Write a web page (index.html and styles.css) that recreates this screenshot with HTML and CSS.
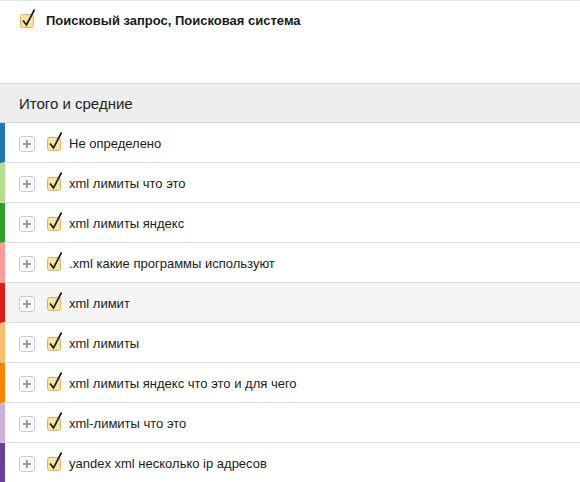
FILE: index.html
```html
<!DOCTYPE html>
<html>
<head>
<meta charset="utf-8">
<link rel="stylesheet" href="styles.css">
</head>
<body>
<div class="top">
  <span class="cb"><svg width="18" height="20" viewBox="0 0 18 20"><rect x="0.5" y="6.5" width="13" height="13" rx="2" fill="#fbe59c" stroke="#cfb66e"/><path d="M3 12.5 L6.5 17 L14.5 1.5" fill="none" stroke="#1c1c1c" stroke-width="1.7"/></svg></span>
  <span class="top-label">Поисковый запрос, Поисковая система</span>
</div>
<div class="head">Итого и средние</div>
<div class="list">
  <div class="row" style="border-left-color:#1f78b4"><span class="plus"></span><span class="cb"><svg width="18" height="20" viewBox="0 0 18 20"><rect x="0.5" y="6.5" width="13" height="13" rx="2" fill="#fbe59c" stroke="#cfb66e"/><path d="M3 12.5 L6.5 17 L14.5 1.5" fill="none" stroke="#1c1c1c" stroke-width="1.7"/></svg></span><span class="label">Не определено</span></div>
  <div class="row" style="border-left-color:#b2df8a"><span class="plus"></span><span class="cb"><svg width="18" height="20" viewBox="0 0 18 20"><rect x="0.5" y="6.5" width="13" height="13" rx="2" fill="#fbe59c" stroke="#cfb66e"/><path d="M3 12.5 L6.5 17 L14.5 1.5" fill="none" stroke="#1c1c1c" stroke-width="1.7"/></svg></span><span class="label">xml лимиты что это</span></div>
  <div class="row" style="border-left-color:#33a02c"><span class="plus"></span><span class="cb"><svg width="18" height="20" viewBox="0 0 18 20"><rect x="0.5" y="6.5" width="13" height="13" rx="2" fill="#fbe59c" stroke="#cfb66e"/><path d="M3 12.5 L6.5 17 L14.5 1.5" fill="none" stroke="#1c1c1c" stroke-width="1.7"/></svg></span><span class="label">xml лимиты яндекс</span></div>
  <div class="row" style="border-left-color:#fb9a99"><span class="plus"></span><span class="cb"><svg width="18" height="20" viewBox="0 0 18 20"><rect x="0.5" y="6.5" width="13" height="13" rx="2" fill="#fbe59c" stroke="#cfb66e"/><path d="M3 12.5 L6.5 17 L14.5 1.5" fill="none" stroke="#1c1c1c" stroke-width="1.7"/></svg></span><span class="label">.xml какие программы используют</span></div>
  <div class="row hover" style="border-left-color:#e31a1c"><span class="plus"></span><span class="cb"><svg width="18" height="20" viewBox="0 0 18 20"><rect x="0.5" y="6.5" width="13" height="13" rx="2" fill="#fbe59c" stroke="#cfb66e"/><path d="M3 12.5 L6.5 17 L14.5 1.5" fill="none" stroke="#1c1c1c" stroke-width="1.7"/></svg></span><span class="label">xml лимит</span></div>
  <div class="row" style="border-left-color:#fdbf6f"><span class="plus"></span><span class="cb"><svg width="18" height="20" viewBox="0 0 18 20"><rect x="0.5" y="6.5" width="13" height="13" rx="2" fill="#fbe59c" stroke="#cfb66e"/><path d="M3 12.5 L6.5 17 L14.5 1.5" fill="none" stroke="#1c1c1c" stroke-width="1.7"/></svg></span><span class="label">xml лимиты</span></div>
  <div class="row" style="border-left-color:#ff7f00"><span class="plus"></span><span class="cb"><svg width="18" height="20" viewBox="0 0 18 20"><rect x="0.5" y="6.5" width="13" height="13" rx="2" fill="#fbe59c" stroke="#cfb66e"/><path d="M3 12.5 L6.5 17 L14.5 1.5" fill="none" stroke="#1c1c1c" stroke-width="1.7"/></svg></span><span class="label">xml лимиты яндекс что это и для чего</span></div>
  <div class="row" style="border-left-color:#cab2d6"><span class="plus"></span><span class="cb"><svg width="18" height="20" viewBox="0 0 18 20"><rect x="0.5" y="6.5" width="13" height="13" rx="2" fill="#fbe59c" stroke="#cfb66e"/><path d="M3 12.5 L6.5 17 L14.5 1.5" fill="none" stroke="#1c1c1c" stroke-width="1.7"/></svg></span><span class="label">xml-лимиты что это</span></div>
  <div class="row" style="border-left-color:#6a3d9a"><span class="plus"></span><span class="cb"><svg width="18" height="20" viewBox="0 0 18 20"><rect x="0.5" y="6.5" width="13" height="13" rx="2" fill="#fbe59c" stroke="#cfb66e"/><path d="M3 12.5 L6.5 17 L14.5 1.5" fill="none" stroke="#1c1c1c" stroke-width="1.7"/></svg></span><span class="label">yandex xml несколько ip адресов</span></div>
</div>
</body>
</html>
```
FILE: styles.css
```css
html, body {
  margin: 0;
  padding: 0;
  background: #fff;
  font-family: "Liberation Sans", Arial, sans-serif;
  color: #1a1a1a;
  overflow: hidden;
}
.top {
  border-top: 1px solid #e4e4e4;
  height: 83px;
  box-sizing: border-box;
  display: flex;
  align-items: flex-start;
  padding: 7px 0 0 20px;
}
.top .cb {
  margin-right: 8px;
  margin-top: 0;
}
.top-label {
  font-size: 13px;
  font-weight: bold;
  margin-top: 5px;
}
.head {
  border-top: 1px solid #d6d6d6;
  border-bottom: 1px solid #d6d6d6;
  background: #eeeeee;
  height: 38px;
  display: flex;
  align-items: center;
  padding-left: 19px;
  font-size: 15px;
  color: #222;
}
.row {
  height: 37px;
  padding-top: 2px;
  border-bottom: 1px solid #dcdcdc;
  border-left: 5px solid #ccc;
  display: flex;
  align-items: center;
  padding-left: 14px;
  font-size: 13px;
}
.row.hover {
  background: #f5f5f5;
}
.plus {
  width: 14px;
  height: 14px;
  border: 1px solid #cccccc;
  border-radius: 3px;
  background: #fff;
  position: relative;
  margin-right: 12px;
  margin-top: 1px;
}
.plus::before, .plus::after {
  content: "";
  position: absolute;
  background: #999;
}
.plus::before {
  left: 3px;
  top: 6px;
  width: 8px;
  height: 2px;
}
.plus::after {
  left: 6px;
  top: 3px;
  width: 2px;
  height: 8px;
}
.cb {
  display: block;
  width: 18px;
  height: 20px;
  margin-top: -6px;
}
.cb svg {
  display: block;
}
.row .cb {
  margin-right: 4px;
}
.label {
  white-space: nowrap;
}
```
